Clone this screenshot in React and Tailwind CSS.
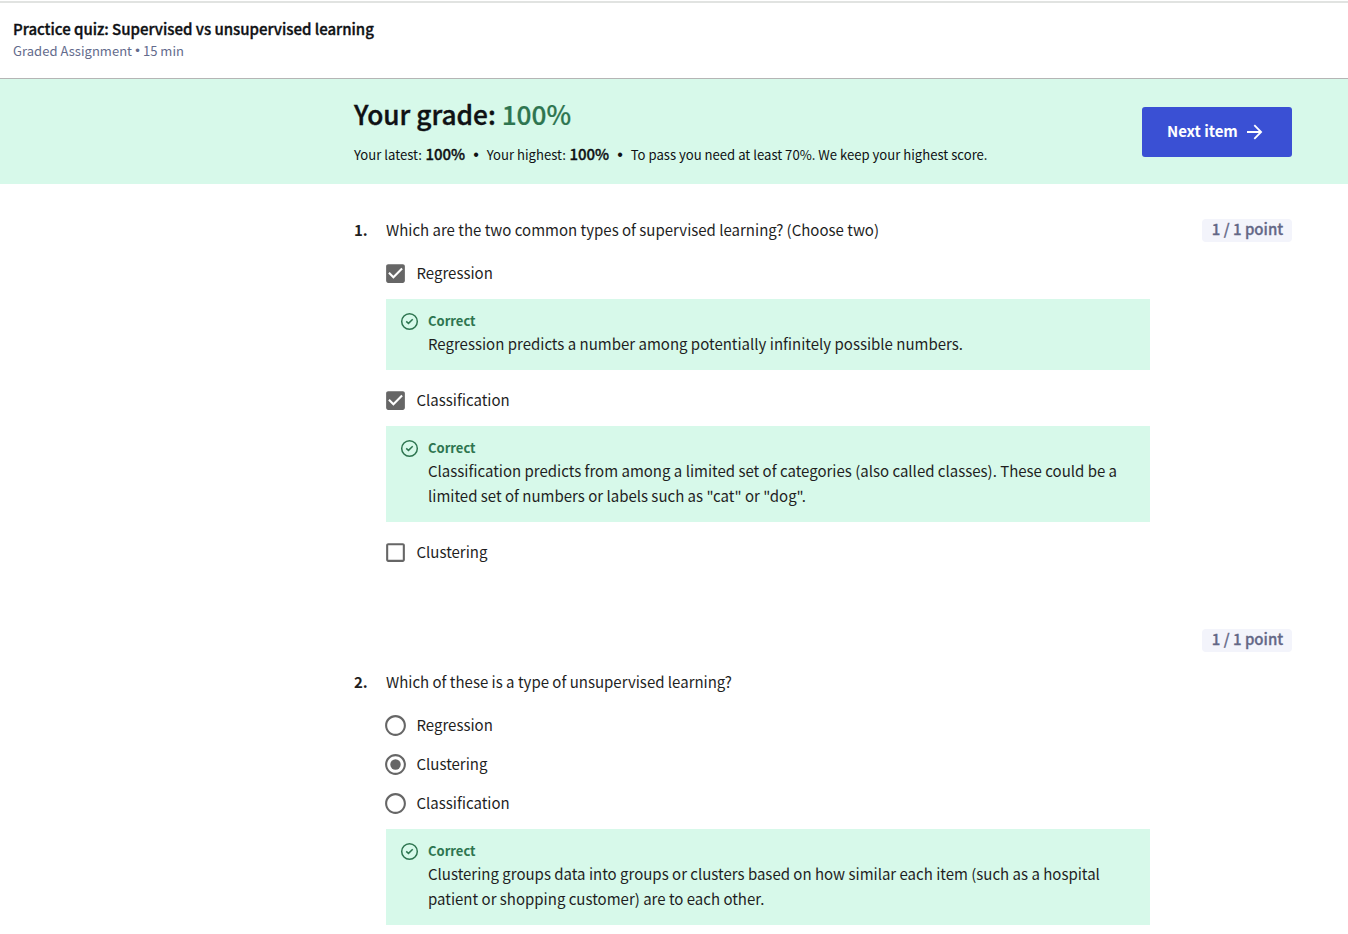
function Checkbox({ checked }) {
  return (
    <svg viewBox="0 0 24 24" className="h-[25px] w-[25px] shrink-0 fill-[#666666]">
      {checked ? (
        <path d="M19 3H5c-1.11 0-2 .9-2 2v14c0 1.1.89 2 2 2h14c1.11 0 2-.9 2-2V5c0-1.1-.89-2-2-2zm-9 14l-5-5 1.41-1.41L10 14.17l7.59-7.59L19 8l-9 9z" />
      ) : (
        <path d="M19 5v14H5V5h14m0-2H5c-1.1 0-2 .9-2 2v14c0 1.1.9 2 2 2h14c1.1 0 2-.9 2-2V5c0-1.1-.9-2-2-2z" />
      )}
    </svg>
  );
}

function Radio({ checked }) {
  return (
    <svg viewBox="0 0 24 24" className="h-[25px] w-[25px] shrink-0 fill-[#666666]">
      <path d="M12 2C6.48 2 2 6.48 2 12s4.48 10 10 10 10-4.48 10-10S17.52 2 12 2zm0 18c-4.42 0-8-3.58-8-8s3.58-8 8-8 8 3.58 8 8-3.58 8-8 8z" />
      {checked && <circle cx="12" cy="12" r="5" />}
    </svg>
  );
}

function Option({ type, checked, label }) {
  return (
    <div className="flex h-[27px] items-center">
      <div className="-ml-[3px] flex">
        {type === "radio" ? <Radio checked={checked} /> : <Checkbox checked={checked} />}
      </div>
      <span className="-mt-[1px] ml-[8.5px] text-[15px] leading-6">{label}</span>
    </div>
  );
}

function Feedback({ children }) {
  return (
    <div className="flex w-[764px] bg-[#d7f9ea] pt-3 pr-4 pb-[14px] pl-[14px] text-[#1f1f1f]">
      <svg viewBox="0 0 19 19" className="mt-px h-[19px] w-[19px] shrink-0 fill-none stroke-[#2e7550]">
        <circle cx="9.5" cy="9.5" r="7.8" strokeWidth="1.5" />
        <path d="M6.2 9.4L8.5 11.4L12.7 7.3" strokeWidth="1.5" />
      </svg>
      <div className="ml-[9px]">
        <div className="text-[13px] leading-5 font-bold text-[#2e7550]">Correct</div>
        <div className="text-[15px] leading-[25px] whitespace-nowrap">{children}</div>
      </div>
    </div>
  );
}

function Points() {
  return (
    <div className="flex h-[23px] w-[90px] items-center justify-center rounded-[4px] bg-[#f3f4fb] text-[#636786]">
      <span className="-mt-[3px] ml-px text-[15px] leading-5 font-medium [-webkit-text-stroke:0.3px]">1 / 1 point</span>
    </div>
  );
}

function Question({ number, children }) {
  return (
    <div className="flex text-[15px] leading-[25px]">
      <span className="w-8 font-bold">{number}.</span>
      <span>{children}</span>
    </div>
  );
}

function Score({ children }) {
  return (
    <span className="-mt-px ml-[0.7px] text-[15px] font-medium [-webkit-text-stroke:0.35px]">{children}</span>
  );
}

function Bullet() {
  return <span className="w-[21.5px] text-center text-[16px] font-['Liberation_Sans',sans-serif]">•</span>;
}

export default function App() {
  return (
    <div className="h-[934px] w-[1348px] overflow-hidden bg-white font-['Noto_Sans_CJK_SC',sans-serif] text-[#1f1f1f]">
      <header className="h-[79px] border-b border-[#b5b5b5] pt-px text-[#0f1114]">
        <div className="h-[2px] bg-[#e1e3e1]" />
        <div className="pt-[15px] pl-[13px]">
          <h1 className="text-[15px] leading-[22px] font-medium tracking-[-0.02px] [-webkit-text-stroke:0.35px]">
            Practice quiz: Supervised vs unsupervised learning
          </h1>
          <p className="mt-px flex text-[13px] leading-5 text-[#636b8c]">
            <span className="tracking-[0.03px]">Graded Assignment</span>
            <span className="w-[11px] text-center font-['Liberation_Sans',sans-serif]">•</span>
            <span>15 min</span>
          </p>
        </div>
      </header>

      <section className="flex h-[105px] items-start justify-between bg-[#d7f9ea] pr-14 pl-[354px] text-[#0f1114]">
        <div className="pt-[17px]">
          <h2 className="text-[26.25px] leading-9 font-medium whitespace-nowrap [-webkit-text-stroke:0.4px]">
            Your grade: <span className="text-[#2e7550] [-webkit-text-stroke:0.2px]">100%</span>
          </h2>
          <div className="mt-[13px] flex text-[13.12px] leading-5 whitespace-pre">
            <span>Your latest: </span>
            <Score>100%</Score>
            <Bullet />
            <span>Your highest: </span>
            <Score>100%</Score>
            <Bullet />
            <span>To pass you need at least 70%. We keep your highest score.</span>
          </div>
        </div>
        <button className="mt-7 flex h-[50px] w-[150px] items-center rounded-[3px] bg-[#3a50d4] pl-[25px] text-white">
          <span className="-mt-[2px] text-[15px] leading-5 font-bold tracking-[-0.05px]">Next item</span>
          <svg viewBox="0 0 16 16" className="ml-[9px] h-4 w-4 fill-none stroke-white">
            <path d="M0 8H14M7.3 1.2L14.1 8L7.3 14.8" strokeWidth="1.8" />
          </svg>
        </button>
      </section>

      <main className="pr-14 pl-[354px]">
        <section className="h-[445px] pt-[33px]">
          <div className="flex justify-between">
            <Question number={1}>
              Which are the two common types of supervised learning? (Choose two)
            </Question>
            <div className="pt-[2px]">
              <Points />
            </div>
          </div>
          <div className="mt-[18px] pl-8">
            <Option type="checkbox" checked label="Regression" />
            <div className="mt-3 mb-[17px]">
              <Feedback>Regression predicts a number among potentially infinitely possible numbers.</Feedback>
            </div>
            <Option type="checkbox" checked label="Classification" />
            <div className="mt-3 mb-[17px]">
              <Feedback>
                Classification predicts from among a limited set of categories (also called classes). These could be a
                <br />
                limited set of numbers or labels such as "cat" or "dog".
              </Feedback>
            </div>
            <Option type="checkbox" label="Clustering" />
          </div>
        </section>

        <section>
          <div className="flex h-10 items-start justify-end">
            <Points />
          </div>
          <Question number={2}>Which of these is a type of unsupervised learning?</Question>
          <div className="mt-[18px] flex flex-col gap-3 pl-8">
            <Option type="radio" label="Regression" />
            <Option type="radio" checked label="Clustering" />
            <Option type="radio" label="Classification" />
            <Feedback>
              Clustering groups data into groups or clusters based on how similar each item (such as a hospital
              <br />
              patient or shopping customer) are to each other.
            </Feedback>
          </div>
        </section>
      </main>
    </div>
  );
}
